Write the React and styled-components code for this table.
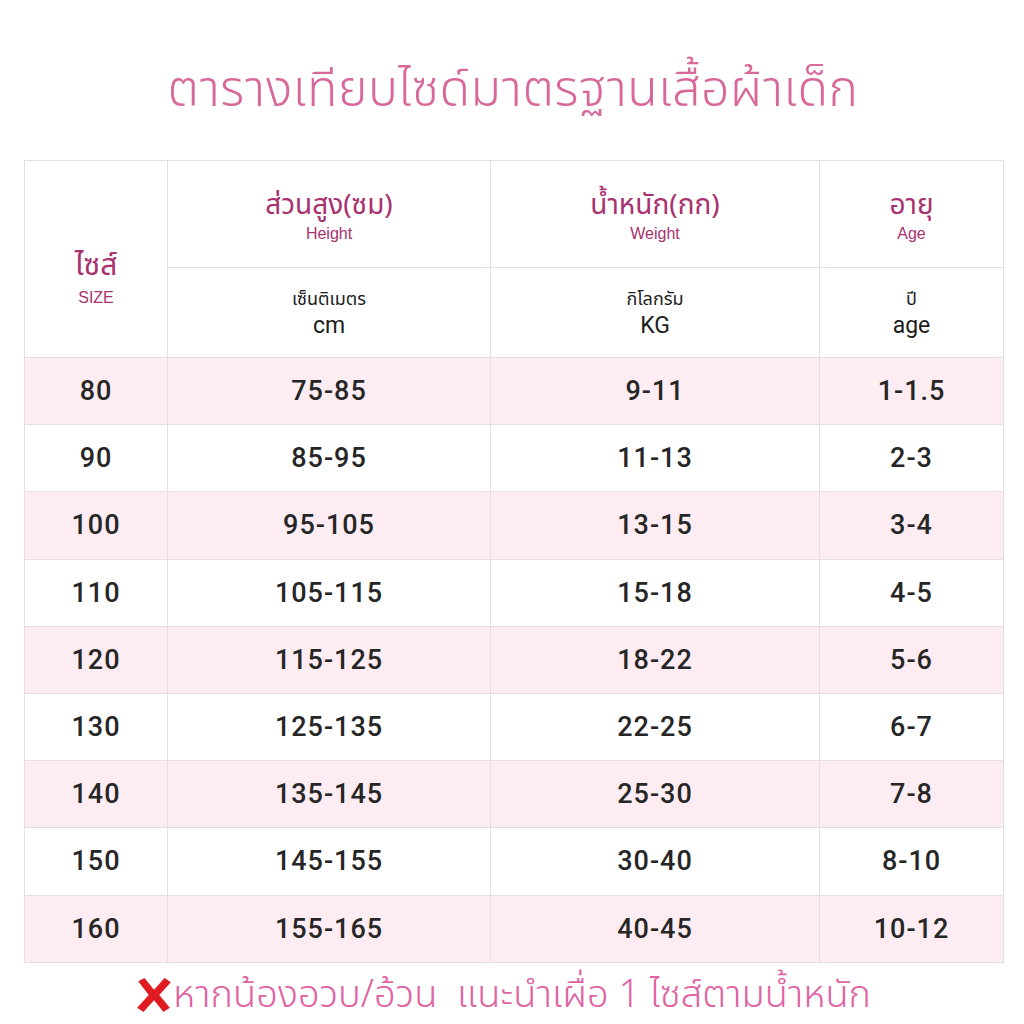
import React from 'react'
import styled, { createGlobalStyle } from 'styled-components'

const GlobalStyle = createGlobalStyle`
  html, body {
    margin: 0;
    padding: 0;
    background: #ffffff;
  }
  body {
    font-family: "Noto Sans Thai", "Noto Sans", "DejaVu Sans", sans-serif;
  }
`

const Page = styled.div`
  width: 1024px;
  height: 1024px;
  box-sizing: border-box;
  padding: 0 22px 0 24px;
  display: flex;
  flex-direction: column;
  background: #fff;
  overflow: hidden;
`

const Title = styled.h1`
  margin: 0;
  height: 160px;
  display: flex;
  align-items: center;
  justify-content: center;
  padding-top: 22px;
  box-sizing: border-box;
  font-weight: 300;
  font-size: 50px;
  color: #d8679a;
  letter-spacing: 0.5px;
`

const Table = styled.table`
  width: 979px;
  border-collapse: collapse;
  table-layout: fixed;
  color: #222;
`

const Cell = styled.td`
  border: 1px solid #e3dfe2;
  text-align: center;
  vertical-align: middle;
  padding: 0;
`

const HeadCell = styled(Cell)`
  height: ${p => p.$h}px;
  padding-top: ${p => p.$pt || 0}px;
  box-sizing: border-box;
`

const HeadThai = styled.div`
  font-size: 28px;
  line-height: 36px;
  color: #a8326f;
`

const HeadEng = styled.div`
  font-family: "Liberation Sans", Arial, sans-serif;
  font-size: 16px;
  line-height: 20px;
  color: #a8326f;
`

const SizeThai = styled(HeadThai)`
  font-size: 30px;
  line-height: 44px;
`

const UnitThai = styled.div`
  font-size: 18px;
  line-height: 26px;
  color: #1d1d1d;
`

const UnitEng = styled.div`
  font-family: "Roboto", sans-serif;
  font-size: 23px;
  line-height: 26px;
  color: #1d1d1d;
`

const Row = styled.tr`
  height: 67.2px;
  background: ${p => (p.$pink ? '#fdedf2' : '#ffffff')};
`

const Num = styled(Cell)`
  font-family: "Roboto", sans-serif;
  font-weight: 500;
  font-size: 27px;
  color: #262626;
  letter-spacing: 1px;
`

const Note = styled.div`
  flex: 1;
  display: flex;
  align-items: center;
  justify-content: center;
  padding: 4px 20px 0 0;
  font-size: 38px;
  font-weight: 300;
  color: #e063a4;
  white-space: nowrap;
`

const Cross = styled.svg`
  width: 38px;
  height: 36px;
  flex: none;
`

const rows = [
  ['80', '75-85', '9-11', '1-1.5'],
  ['90', '85-95', '11-13', '2-3'],
  ['100', '95-105', '13-15', '3-4'],
  ['110', '105-115', '15-18', '4-5'],
  ['120', '115-125', '18-22', '5-6'],
  ['130', '125-135', '22-25', '6-7'],
  ['140', '135-145', '25-30', '7-8'],
  ['150', '145-155', '30-40', '8-10'],
  ['160', '155-165', '40-45', '10-12'],
]

const App = () => {
  return (
    <>
      <GlobalStyle />
      <Page>
        <Title>ตารางเทียบไซด์มาตรฐานเสื้อผ้าเด็ก</Title>
        <Table>
          <colgroup>
            <col style={{ width: 143 }} />
            <col style={{ width: 323 }} />
            <col style={{ width: 329 }} />
            <col style={{ width: 184 }} />
          </colgroup>
          <thead>
            <tr>
              <HeadCell rowSpan={2} $h={197} $pt={34}>
                <SizeThai>ไซส์</SizeThai>
                <HeadEng>SIZE</HeadEng>
              </HeadCell>
              <HeadCell $h={107} $pt={4}>
                <HeadThai>ส่วนสูง(ซม)</HeadThai>
                <HeadEng>Height</HeadEng>
              </HeadCell>
              <HeadCell $h={107} $pt={4}>
                <HeadThai>น้ำหนัก(กก)</HeadThai>
                <HeadEng>Weight</HeadEng>
              </HeadCell>
              <HeadCell $h={107} $pt={4}>
                <HeadThai>อายุ</HeadThai>
                <HeadEng>Age</HeadEng>
              </HeadCell>
            </tr>
            <tr>
              <HeadCell $h={90}>
                <UnitThai>เซ็นติเมตร</UnitThai>
                <UnitEng>cm</UnitEng>
              </HeadCell>
              <HeadCell $h={90}>
                <UnitThai>กิโลกรัม</UnitThai>
                <UnitEng>KG</UnitEng>
              </HeadCell>
              <HeadCell $h={90}>
                <UnitThai>ปี</UnitThai>
                <UnitEng>age</UnitEng>
              </HeadCell>
            </tr>
          </thead>
          <tbody>
            {rows.map((r, i) => (
              <Row key={r[0]} $pink={i % 2 === 0}>
                {r.map((v, j) => (
                  <Num key={j}>{v}</Num>
                ))}
              </Row>
            ))}
          </tbody>
        </Table>
        <Note>
          <Cross viewBox="0 0 36 34">
            <path d="M3 4 L9 1 L18 12 L28 1 L34 5 L23 17 L33 29 L27 33 L18 22 L8 33 L2 29 L13 17 Z" fill="#e01b22" />
          </Cross>
          <span>หากน้องอวบ/อ้วน&nbsp;&nbsp;แนะนำเผื่อ 1 ไซส์ตามน้ำหนัก</span>
        </Note>
      </Page>
    </>
  )
}

export default App
